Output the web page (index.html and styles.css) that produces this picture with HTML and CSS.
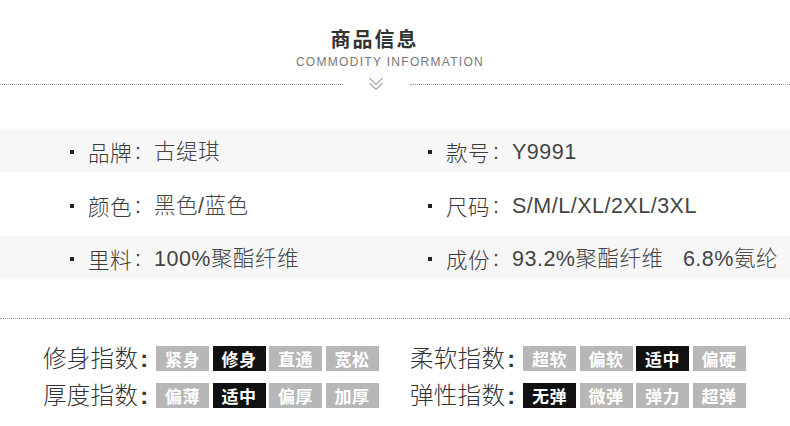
FILE: index.html
```html
<!DOCTYPE html>
<html lang="zh">
<head>
<meta charset="utf-8">
<link rel="stylesheet" href="styles.css">
</head>
<body>
<div class="page">
  <header class="head">
    <h1 class="title">商品信息</h1>
    <div class="subtitle">COMMODITY INFORMATION</div>
    <div class="divider">
      <span class="dots dots-left"></span>
      <svg class="chev" width="16" height="16" viewBox="0 0 16 16" aria-hidden="true">
        <path d="M1.5 2 L8 8.5 L14.5 2 M1.5 7 L8 13.5 L14.5 7" fill="none" stroke="#666" stroke-width="1"/>
      </svg>
      <span class="dots dots-right"></span>
    </div>
  </header>

  <section class="info">
    <div class="info-row shaded">
      <div class="cell"><i class="bullet"></i><span class="k">品牌</span><span class="colon">:</span><span class="v">古缇琪</span></div>
      <div class="cell"><i class="bullet"></i><span class="k">款号</span><span class="colon">:</span><span class="v">Y9991</span></div>
    </div>
    <div class="info-row">
      <div class="cell"><i class="bullet"></i><span class="k">颜色</span><span class="colon">:</span><span class="v">黑色/蓝色</span></div>
      <div class="cell"><i class="bullet"></i><span class="k">尺码</span><span class="colon">:</span><span class="v">S/M/L/XL/2XL/3XL</span></div>
    </div>
    <div class="info-row shaded">
      <div class="cell"><i class="bullet"></i><span class="k">里料</span><span class="colon">:</span><span class="v">100%聚酯纤维</span></div>
      <div class="cell"><i class="bullet"></i><span class="k">成份</span><span class="colon">:</span><span class="v">93.2%聚酯纤维&nbsp;&nbsp;&nbsp;6.8%氨纶</span></div>
    </div>
  </section>

  <div class="rule"></div>

  <section class="index">
    <div class="group">
      <span class="label">修身指数<span class="lcolon">:</span></span>
      <span class="tag">紧身</span><span class="tag on">修身</span><span class="tag">直通</span><span class="tag">宽松</span>
    </div>
    <div class="group">
      <span class="label">柔软指数<span class="lcolon">:</span></span>
      <span class="tag">超软</span><span class="tag">偏软</span><span class="tag on">适中</span><span class="tag">偏硬</span>
    </div>
    <div class="group">
      <span class="label">厚度指数<span class="lcolon">:</span></span>
      <span class="tag">偏薄</span><span class="tag on">适中</span><span class="tag">偏厚</span><span class="tag">加厚</span>
    </div>
    <div class="group">
      <span class="label">弹性指数<span class="lcolon">:</span></span>
      <span class="tag on">无弹</span><span class="tag">微弹</span><span class="tag">弹力</span><span class="tag">超弹</span>
    </div>
  </section>
</div>
</body>
</html>
```

FILE: styles.css
```css
* { box-sizing: border-box; }
html, body { margin: 0; padding: 0; background: #fff; }
body {
  font-family: "Liberation Sans", "Noto Sans CJK SC", sans-serif;
  color: #444;
}
.page { width: 790px; height: 426px; overflow: hidden; }

.head { padding-top: 27px; display: flex; flex-direction: column; align-items: center; }
.title {
  margin: 0 0 0 -41px;
  font-family: "Noto Sans CJK SC", sans-serif;
  font-weight: 700;
  font-size: 20px;
  line-height: 24px;
  letter-spacing: 2px;
  color: #333;
}
.subtitle {
  margin-top: 4px;
  font-family: "Liberation Sans", sans-serif;
  font-size: 12px;
  line-height: 14px;
  letter-spacing: 1.3px;
  color: #777;
  margin-left: -10px;
}
.divider {
  margin-top: 7px;
  width: 790px;
  height: 16px;
  display: flex;
  align-items: center;
}
.dots { height: 0; border-top: 1px dotted #999; }
.dots-left { width: 343px; }
.dots-right { flex: 1; }
.chev { margin: 0 26px 0 25px; }

.info { margin-top: 37px; display: flex; flex-direction: column; gap: 10.5px; }
.info-row { height: 43px; display: flex; align-items: center; padding-left: 70px; padding-top: 3px; }
.info-row.shaded { background: #f7f7f7; }
.cell { width: 358px; display: flex; align-items: center; font-size: 21.5px; line-height: 24px; white-space: nowrap; }
.bullet { display: block; width: 4px; height: 4px; background: #222; margin-right: 14px; flex: none; }
.k { font-family: "Noto Sans CJK SC", sans-serif; font-weight: 300; letter-spacing: 0.5px; color: #3a3a3a; }
.colon { margin: 0 13px 0 3px; }
.v { font-family: "Liberation Sans", "Noto Sans CJK SC", sans-serif; font-weight: 300; letter-spacing: 0.5px; }

.rule { margin-top: 39px; height: 0; border-top: 1px dotted #999; }

.index {
  margin-top: 27px;
  padding-left: 43px;
  display: grid;
  grid-template-columns: 367px 367px;
  row-gap: 12px;
}
.group { display: flex; align-items: center; height: 25px; }
.label {
  width: 113px;
  font-family: "Noto Sans CJK SC", sans-serif;
  font-weight: 300;
  font-size: 23.5px;
  line-height: 25px;
  letter-spacing: 0.3px;
  color: #333;
  white-space: nowrap;
}
.lcolon { font-family: "Liberation Sans", sans-serif; font-weight: 700; margin-left: 2px; }
.tag {
  width: 53px;
  height: 25px;
  margin-right: 3.5px;
  background: #b7b7b7;
  color: #fff;
  font-family: "Noto Sans CJK SC", sans-serif;
  font-weight: 700;
  font-size: 17px;
  line-height: 25px;
  text-align: center;
  letter-spacing: 0.5px;
}
.tag.on { background: #111; }
```
